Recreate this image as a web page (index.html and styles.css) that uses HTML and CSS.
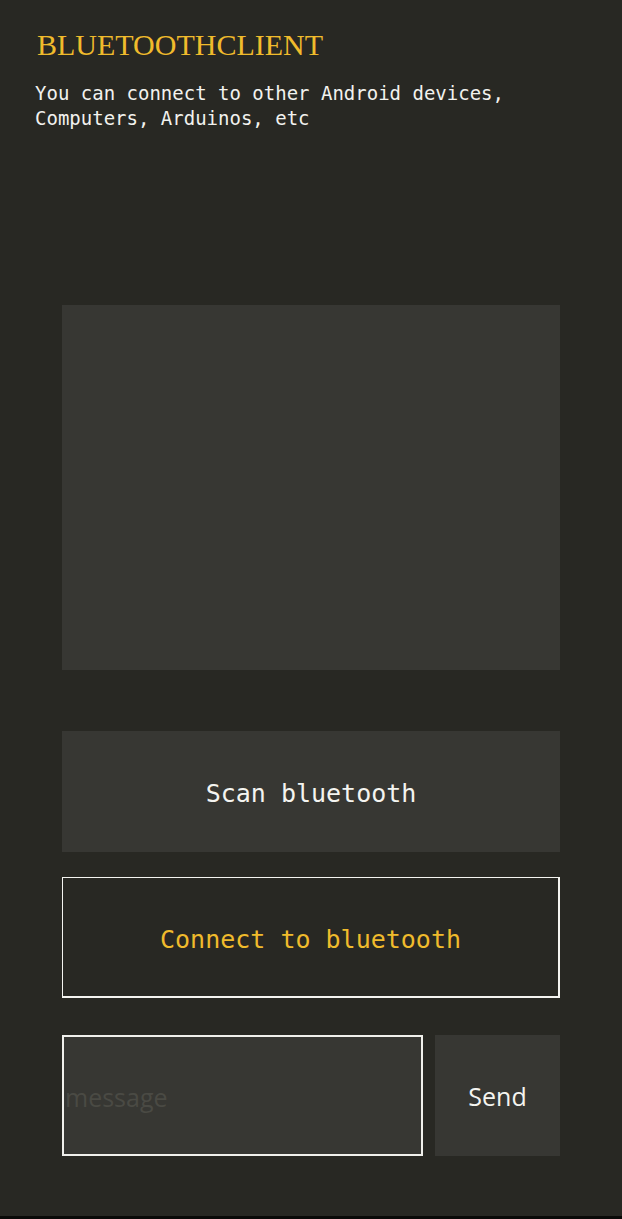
FILE: index.html
```html
<!DOCTYPE html>
<html>
<head>
<meta charset="utf-8">
<link rel="stylesheet" href="styles.css">
</head>
<body>
<div class="app">
  <header class="header">
    <h1 class="title">BLUETOOTHCLIENT</h1>
    <p class="subtitle">You can connect to other Android devices,<br>Computers, Arduinos, etc</p>
  </header>
  <main class="content">
    <div class="device-list"></div>
    <button class="btn btn-scan">Scan bluetooth</button>
    <button class="btn btn-connect">Connect to bluetooth</button>
    <div class="send-row">
      <input class="message" type="text" placeholder="message">
      <button class="btn btn-send">Send</button>
    </div>
  </main>
</div>
</body>
</html>
```

FILE: styles.css
```css
* { box-sizing: border-box; }
html, body { margin: 0; padding: 0; background: #282823; }
.app {
  height: 1219px;
  background: #282823;
  border-bottom: 3px solid #0a0a08;
  display: flex;
  flex-direction: column;
}
.header {
  padding: 30px 0 0 35px;
}
.title {
  margin: 0 0 0 2px;
  font-family: "Liberation Serif", serif;
  font-weight: normal;
  font-size: 30px;
  line-height: 30px;
  color: #f0bb2c;
}
.subtitle {
  margin: 21px 0 0 0;
  font-family: "DejaVu Sans Mono", monospace;
  font-size: 19px;
  line-height: 25px;
  color: #f2f2ee;
}
.content {
  padding: 0 62px;
  display: flex;
  flex-direction: column;
}
.device-list {
  margin-top: 174px;
  height: 365px;
  background: #373733;
}
.btn {
  border: none;
  background: #373733;
  color: #f4f4f0;
  font-family: "DejaVu Sans Mono", monospace;
  font-size: 25px;
  padding: 4px 0 0 0;
  height: 121px;
  display: flex;
  align-items: center;
  justify-content: center;
}
.btn-scan { margin-top: 61px; }
.btn-connect {
  margin-top: 25px;
  background: #282823;
  border: 1px solid #f4f4f0;
  border-right-width: 2px;
  border-bottom-width: 2px;
  color: #f0bb2c;
  width: 498px;
}
.send-row {
  margin-top: 37px;
  display: flex;
  gap: 12px;
  height: 121px;
}
.message {
  width: 361px;
  height: 121px;
  background: #373733;
  border: 2px solid #f0f0ec;
  padding: 2px 0 0 1px;
  font-family: "Open Sans", sans-serif;
  font-size: 25px;
  color: #f4f4f0;
  outline: none;
}
.message::placeholder { color: #4a4a44; }
.btn-send {
  width: 125px;
  padding-top: 0;
  font-family: "Open Sans", sans-serif;
  font-size: 25px;
}
```
